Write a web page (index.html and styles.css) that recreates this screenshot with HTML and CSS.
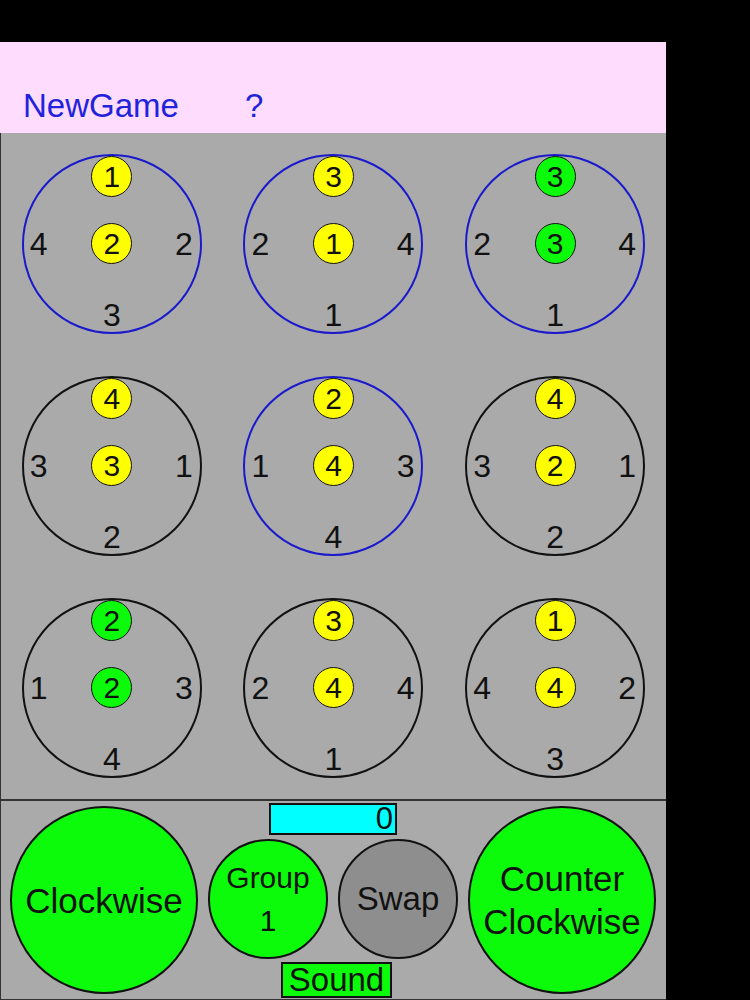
FILE: index.html
```html
<!DOCTYPE html>
<html>
<head>
<meta charset="utf-8">
<link rel="stylesheet" href="styles.css">
</head>
<body>
<div class="app">
  <header class="header">
    <span class="link">NewGame</span>
    <span class="link help">?</span>
  </header>
  <main class="board">
    <div class="cell"><div class="ring sel">
      <div class="dot top yellow">1</div><span class="lbl left">4</span><div class="dot mid yellow">2</div><span class="lbl right">2</span><span class="lbl bottom">3</span>
    </div></div>
    <div class="cell"><div class="ring sel">
      <div class="dot top yellow">3</div><span class="lbl left">2</span><div class="dot mid yellow">1</div><span class="lbl right">4</span><span class="lbl bottom">1</span>
    </div></div>
    <div class="cell"><div class="ring sel">
      <div class="dot top green">3</div><span class="lbl left">2</span><div class="dot mid green">3</div><span class="lbl right">4</span><span class="lbl bottom">1</span>
    </div></div>
    <div class="cell"><div class="ring">
      <div class="dot top yellow">4</div><span class="lbl left">3</span><div class="dot mid yellow">3</div><span class="lbl right">1</span><span class="lbl bottom">2</span>
    </div></div>
    <div class="cell"><div class="ring sel">
      <div class="dot top yellow">2</div><span class="lbl left">1</span><div class="dot mid yellow">4</div><span class="lbl right">3</span><span class="lbl bottom">4</span>
    </div></div>
    <div class="cell"><div class="ring">
      <div class="dot top yellow">4</div><span class="lbl left">3</span><div class="dot mid yellow">2</div><span class="lbl right">1</span><span class="lbl bottom">2</span>
    </div></div>
    <div class="cell"><div class="ring">
      <div class="dot top green">2</div><span class="lbl left">1</span><div class="dot mid green">2</div><span class="lbl right">3</span><span class="lbl bottom">4</span>
    </div></div>
    <div class="cell"><div class="ring">
      <div class="dot top yellow">3</div><span class="lbl left">2</span><div class="dot mid yellow">4</div><span class="lbl right">4</span><span class="lbl bottom">1</span>
    </div></div>
    <div class="cell"><div class="ring">
      <div class="dot top yellow">1</div><span class="lbl left">4</span><div class="dot mid yellow">4</div><span class="lbl right">2</span><span class="lbl bottom">3</span>
    </div></div>
  </main>
  <footer class="controls">
    <button class="btn big green">Clockwise</button>
    <div class="middle">
      <div class="score">0</div>
      <div class="pair">
        <button class="btn small green group">Group<br>1</button>
        <button class="btn small gray swap">Swap</button>
      </div>
      <button class="sound">Sound</button>
    </div>
    <button class="btn big green">Counter<br>Clockwise</button>
  </footer>
</div>
</body>
</html>
```

FILE: styles.css
```css
html, body {
  margin: 0;
  padding: 0;
  background: #000;
}

body {
  font-family: "Liberation Sans", Arial, sans-serif;
  color: #111;
}

.app {
  width: 666px;
  margin-top: 42px;
}

.header {
  height: 91px;
  box-sizing: border-box;
  background: #fddcfd;
  display: flex;
  align-items: flex-end;
  padding: 0 0 11px 23px;
}

.link {
  font-size: 33px;
  line-height: 32px;
  color: #2222dd;
}

.help {
  margin-left: 66px;
}

.board {
  height: 666px;
  background: #aaaaaa;
  border-left: 1px solid #333;
  border-bottom: 2px solid #333;
  display: grid;
  grid-template-columns: repeat(3, 1fr);
  grid-template-rows: repeat(3, 1fr);
}

.cell {
  display: flex;
  align-items: center;
  justify-content: center;
}

.ring {
  width: 180px;
  height: 180px;
  box-sizing: border-box;
  border: 2px solid #111;
  border-radius: 50%;
  display: grid;
  grid-template-columns: 1fr 41px 1fr;
  grid-template-rows: 41px 26px 41px 1fr;
}

.ring.sel {
  border-color: #1a1acc;
}

.dot {
  width: 41px;
  height: 41px;
  box-sizing: border-box;
  border: 1.5px solid #111;
  border-radius: 50%;
  display: flex;
  align-items: center;
  justify-content: center;
  font-size: 30px;
  line-height: 1;
}

.dot.top {
  grid-column: 2;
  grid-row: 1;
}

.dot.mid {
  grid-column: 2;
  grid-row: 3;
}

.yellow {
  background: #ffff00;
}

.green {
  background: #0bfb0b;
}

.lbl {
  font-size: 32px;
  line-height: 32px;
  align-self: center;
}

.lbl.left {
  grid-column: 1;
  grid-row: 3;
  justify-self: start;
  margin-left: 6px;
}

.lbl.right {
  grid-column: 3;
  grid-row: 3;
  justify-self: end;
  margin-right: 7px;
}

.lbl.bottom {
  grid-column: 1 / -1;
  grid-row: 4;
  justify-self: center;
  align-self: end;
  margin-bottom: 1px;
}

.controls {
  height: 198px;
  background: #aaaaaa;
  border-left: 1px solid #333;
  border-bottom: 1px solid #333;
  display: flex;
  align-items: center;
  gap: 10px;
  padding-left: 9px;
}

.btn {
  font-family: "Liberation Sans", Arial, sans-serif;
  color: #111;
  border: 2px solid #111;
  border-radius: 50%;
  box-sizing: border-box;
  padding: 0;
  display: flex;
  align-items: center;
  justify-content: center;
  text-align: center;
}

.big {
  width: 188px;
  height: 188px;
  font-size: 35px;
  line-height: 43px;
}

.small {
  width: 120px;
  height: 120px;
}

.group {
  font-size: 30px;
  line-height: 43px;
}

.swap {
  font-size: 33px;
  line-height: 36px;
}

.gray {
  background: #8e8e8e;
}

.middle {
  display: flex;
  flex-direction: column;
  align-items: center;
}

.pair {
  display: flex;
  gap: 10px;
  margin: 4px 0 3px;
}

.score {
  width: 128px;
  height: 32px;
  box-sizing: border-box;
  border: 2px solid #111;
  background: #00ffff;
  font-size: 31px;
  line-height: 28px;
  text-align: right;
  padding-right: 2px;
}

.sound {
  width: 111px;
  height: 36px;
  box-sizing: border-box;
  border: 2px solid #111;
  background: #0bfb0b;
  font-family: "Liberation Sans", Arial, sans-serif;
  font-size: 33px;
  line-height: 32px;
  color: #111;
  padding: 0;
  margin-left: 7px;
}
```
